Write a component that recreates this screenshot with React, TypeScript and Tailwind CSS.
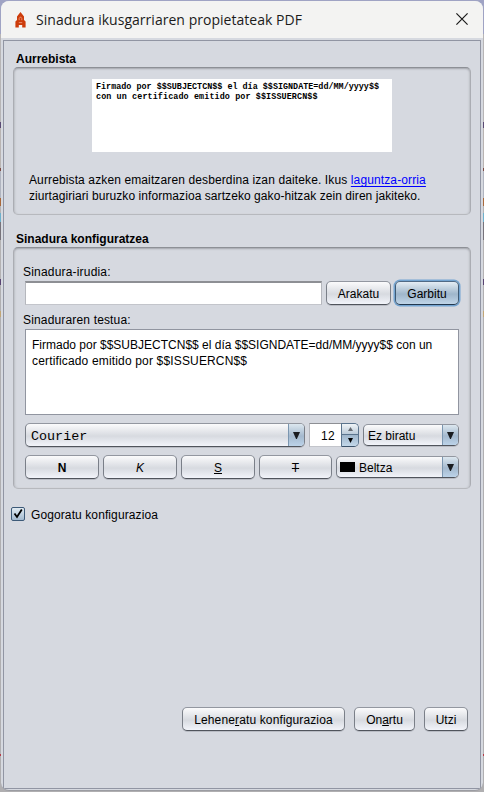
import type { ReactNode } from "react";

const buttonBase =
  "flex shrink-0 items-center justify-center rounded-[5px] border border-t-[#9397a0] border-x-[#7a7f88] border-b-[#50545c] bg-linear-to-b from-[#fbfbfc] via-[#d7dae0] via-55% to-[#f2f4fa] pt-[2px] shadow-[0_1px_0_#b9bcc4]";

function Button({ className, children }: { className: string; children: ReactNode }) {
  return <button className={`${buttonBase} ${className}`}>{children}</button>;
}

function Group({ title, className, children }: { title: string; className: string; children: ReactNode }) {
  return (
    <section>
      <h2 className="h-[17px] pt-px pl-[3px] text-[12px] leading-[17px] font-bold">{title}</h2>
      <div
        className={`rounded-[5px] border border-t-[#8d9096] border-x-[#abadb3] border-b-[#b7b9be] shadow-[inset_0_2px_2px_-1px_#a2a5ab,inset_2px_0_2px_-1px_#bfc1c7,inset_-2px_0_2px_-1px_#bfc1c7] ${className}`}
      >
        {children}
      </div>
    </section>
  );
}

function Combo({ className, children }: { className: string; children: ReactNode }) {
  return (
    <div
      className={`flex shrink-0 overflow-hidden rounded-[5px] border border-t-[#9397a0] border-x-[#7a7f88] border-b-[#50545c] bg-linear-to-b from-[#fbfbfc] via-[#d7dae0] via-55% to-[#f2f4fa] shadow-[0_1px_0_#b9bcc4] ${className}`}
    >
      <div className="flex flex-1 items-center">{children}</div>
      <div className="flex w-[16px] items-center justify-center border-l border-[#7b96b0] bg-linear-to-b from-[#dce7ef] via-[#a4b9ce] via-55% to-[#bcd3e9]">
        <svg width="7" height="7" viewBox="0 0 7 7" fill="#191c20">
          <path d="M0 0H7L3.9 7H3.1Z" />
        </svg>
      </div>
    </div>
  );
}

export default function App() {
  return (
    <div className="h-[792px] w-[484px] overflow-hidden bg-[#b0afb1] bg-[linear-gradient(180deg,#9fa3c4_0px,#9fa3c4_34px,#b7b5b6_34px,#b7b5b6_122px,#5a4a74_122px,#5a4a74_128px,#b9b4b2_128px,#b9b4b2_168px,#7c4b45_168px,#7c4b45_171px,#b0b4bf_171px,#b0b4bf_198px,#a9683a_198px,#a9683a_206px,#b4b2b3_206px,#b4b2b3_213px,#6db0cc_213px,#6db0cc_222px,#77737b_222px,#77737b_240px,#b4b2b3_240px,#b4b2b3_279px,#584372_279px,#584372_285px,#b0afb1_285px,#b0afb1_311px,#c1a575_311px,#c1a575_317px,#b0afb1_317px,#b0afb1_754px,#b63a46_754px,#b63a46_756px,#b0afb1_756px)] p-px pb-0 font-['Liberation_Sans',Arial,sans-serif] text-[12px] text-black">
      <div className="flex h-[790px] w-[482px] flex-col overflow-hidden rounded-[8px] border-b border-[#9b9ca2] bg-[#d6d9e0]">
        <header className="flex h-[37px] shrink-0 items-center bg-[#f3f3f2] pl-[14px]">
          <svg width="11" height="16" viewBox="0 0 11 16" className="shrink-0">
            <path d="M5.5 0L9 4.5V8L10.6 9.5V15.5H7.2V13H3.8V15.5H0.4V9.5L2 8V4.5Z" fill="#cd3c0b" />
            <path d="M4.2 8.2V6.5L5.5 4.8L6.8 6.5V8.2M3.8 10.6H7.2" stroke="#f0a286" strokeWidth="0.8" fill="none" />
          </svg>
          <h1 className="ml-[10px] font-['Open_Sans','Noto_Sans',sans-serif] text-[14px] tracking-[0.03px] whitespace-nowrap text-[#1b1b1b]">
            Sinadura ikusgarriaren propietateak PDF
          </h1>
          <svg className="-mt-px mr-[15px] ml-auto shrink-0" width="12" height="12" viewBox="0 0 12 12" stroke="#1a1a1a" strokeWidth="1.2">
            <path d="M0.4 0.4L11.6 11.6M11.6 0.4L0.4 11.6" />
          </svg>
        </header>

        <main className="mx-[2px] mt-[2px] h-[749px] border border-[#9195a3] px-[9px] pt-[9px]">
          <Group title="Aurrebista" className="h-[148px] pt-[11px]">
            <div className="ml-[78px] h-[73px] w-[300px] bg-white pt-[3px] pl-[4px] font-['Liberation_Mono','Courier_New',monospace] text-[8.43px] leading-[10px] font-bold whitespace-pre">
              <div>Firmado por $$SUBJECTCN$$ el día $$SIGNDATE=dd/MM/yyyy$$</div>
              <div className="tracking-[0.1px]">con un certificado emitido por $$ISSUERCN$$</div>
            </div>
            <p className="mt-[20px] ml-[15px] leading-[16px] whitespace-nowrap">
              <span className="tracking-[0.12px]">
                Aurrebista azken emaitzaren desberdina izan daiteke. Ikus{" "}
                <a className="text-[#0000ff] underline decoration-[#0000ff] underline-offset-2">laguntza-orria</a>
              </span>
              <br />
              <span className="tracking-[0.07px]">
                ziurtagiriari buruzko informazioa sartzeko gako-hitzak zein diren jakiteko.
              </span>
            </p>
          </Group>

          <div className="mt-[15px]">
            <Group title="Sinadura konfiguratzea" className="h-[242px] pt-[16px] pr-[11px] pl-[11px]">
              <div className="-ml-[2px] h-[17px] leading-[16px] tracking-[0.19px]">Sinadura-irudia:</div>
              <div className="flex h-[24px]">
                <input
                  className="h-[24px] w-[297px] border border-t-2 border-t-[#8d8f94] border-x-[#b5b7bd] border-b-[#c3c5cb] bg-white"
                  aria-label="Sinadura-irudia"
                />
                <Button className="ml-[4px] h-[24px] w-[65px]">Arakatu</Button>
                <button className="ml-[4px] h-[24px] w-[64px] rounded-[5px] border border-t-[#506a85] border-x-[#3f5a74] border-b-[#22384f] bg-linear-to-b from-[#e4edf4] via-[#9fb6cb] via-55% to-[#c0d5e8] pt-[2px] shadow-[0_0_0_1.5px_#73a4d1]">
                  Garbitu
                </button>
              </div>
              <div className="mt-[7px] -ml-[2px] h-[17px] leading-[16px] tracking-[0.16px]">Sinaduraren testua:</div>
              <div className="h-[86px] w-[434px] border border-[#9195a0] bg-white pt-[7px] pl-[6px] leading-[16px] whitespace-nowrap">
                Firmado por $$SUBJECTCN$$ el día $$SIGNDATE=dd/MM/yyyy$$ con un
                <br />
                <span className="tracking-[0.16px]">certificado emitido por $$ISSUERCN$$</span>
              </div>
              <div className="mt-[8px] flex h-[24px] items-center">
                <Combo className="h-[24px] w-[280px]">
                  <span className="pt-[4px] pl-[5px] font-['Liberation_Mono','Courier_New',monospace] text-[13.4px]">Courier</span>
                </Combo>
                <div className="ml-[4px] flex h-[24px] w-[50px]">
                  <div className="flex w-[32px] items-center justify-end border border-r-0 border-t-[#8d8f94] border-b-[#c3c5cb] border-l-[#b5b7bd] bg-white pt-[2px] pr-[6px] tracking-[0.3px]">
                    12
                  </div>
                  <div className="flex w-[18px] flex-col overflow-hidden rounded-r-[5px] border border-[#5b748d] border-b-[#3b526a]">
                    <div className="flex h-[10px] items-center justify-center bg-linear-to-b from-[#f0f4f7] to-[#bccbd9]">
                      <svg width="5" height="4" viewBox="0 0 5 4" fill="#666b72">
                        <path d="M2.5 0L5 4H0Z" />
                      </svg>
                    </div>
                    <div className="flex flex-1 items-center justify-center border-t border-[#5b748d] bg-linear-to-b from-[#9fb5ca] to-[#c3d8ea]">
                      <svg width="5" height="5" viewBox="0 0 5 5" fill="#000">
                        <path d="M0 0H5L2.5 5Z" />
                      </svg>
                    </div>
                  </div>
                </div>
                <Combo className="ml-[4px] h-[22px] w-[96px]">
                  <span className="pt-[2px] pl-[4px]">Ez biratu</span>
                </Combo>
              </div>
              <div className="mt-[8px] flex h-[24px] items-center gap-[4px]">
                <Button className="h-[24px] w-[74px] font-bold">N</Button>
                <Button className="h-[24px] w-[74px] italic">K</Button>
                <Button className="h-[24px] w-[74px] underline">S</Button>
                <Button className="h-[24px] w-[73px] line-through">T</Button>
                <Combo className="h-[22px] w-[123px]">
                  <span className="ml-[3px] h-[10px] w-[15px] bg-black" />
                  <span className="pt-[2px] pl-[4px]">Beltza</span>
                </Combo>
              </div>
            </Group>
          </div>

          <label className="mt-[17px] -ml-[2px] flex h-[16px] items-center">
            <span className="flex h-[14px] w-[14px] items-center justify-center rounded-[2px] border border-[#3d5a78] bg-linear-to-b from-[#e1ebf2] to-[#a3bad0]">
              <svg width="10" height="10" viewBox="0 0 10 10" fill="none" stroke="#000" strokeWidth="1.8" className="-mt-px">
                <path d="M1.5 4.5L4 8L8.8 0.5" />
              </svg>
            </span>
            <span className="ml-[6px] pt-[2px] tracking-[0.1px]">Gogoratu konfigurazioa</span>
          </label>

          <footer className="mt-[185px] flex h-[24px] justify-end gap-[9px] pr-[3px]">
            <Button className="h-[24px] w-[163px]">
              <span className="tracking-[0.13px] whitespace-pre">
                Lehene<u>r</u>atu konfigurazioa
              </span>
            </Button>
            <Button className="h-[24px] w-[61px]">
              <span>
                On<u>a</u>rtu
              </span>
            </Button>
            <Button className="h-[24px] w-[44px]">Utzi</Button>
          </footer>
        </main>
      </div>
    </div>
  );
}
